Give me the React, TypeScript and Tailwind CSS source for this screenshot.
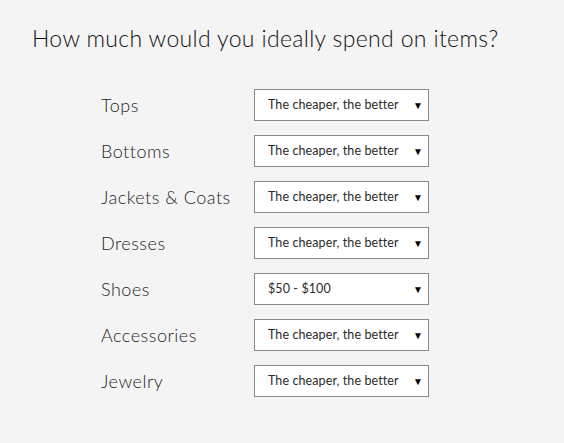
import { FC } from 'react';

const rows: { label: string; value: string }[] = [
  { label: 'Tops', value: 'The cheaper, the better' },
  { label: 'Bottoms', value: 'The cheaper, the better' },
  { label: 'Jackets & Coats', value: 'The cheaper, the better' },
  { label: 'Dresses', value: 'The cheaper, the better' },
  { label: 'Shoes', value: '$50 - $100' },
  { label: 'Accessories', value: 'The cheaper, the better' },
  { label: 'Jewelry', value: 'The cheaper, the better' },
];

const Dropdown: FC<{ value: string }> = ({ value }) => (
  <div className="w-[175px] h-[32px] bg-white border border-[#8a8a8a] flex items-center justify-between pl-[13px] pr-[5px] text-[12.5px] font-normal tracking-[0.1px] text-[#2a2a2a]">
    <span>{value}</span>
    <span className="text-[10px] leading-none text-black">▼</span>
  </div>
);

const App: FC = () => {
  return (
    <div className="w-[564px] h-[443px] bg-[#f4f4f4] text-[#222] font-['Lato','Open_Sans',sans-serif] font-light overflow-hidden">
      <h1 className="pt-[24px] pl-[32px] text-[23px] leading-[28px] tracking-[0.35px] text-[#111]">
        How much would you ideally spend on items?
      </h1>
      <div className="mt-[37px] flex flex-col gap-[14px]">
        {rows.map((r) => (
          <div key={r.label} className="flex items-center">
            <div className="w-[254px] pl-[101px] text-[18px] tracking-[0.5px] text-[#1e1e1e]">{r.label}</div>
            <Dropdown value={r.value} />
          </div>
        ))}
      </div>
    </div>
  );
};

export default App;
